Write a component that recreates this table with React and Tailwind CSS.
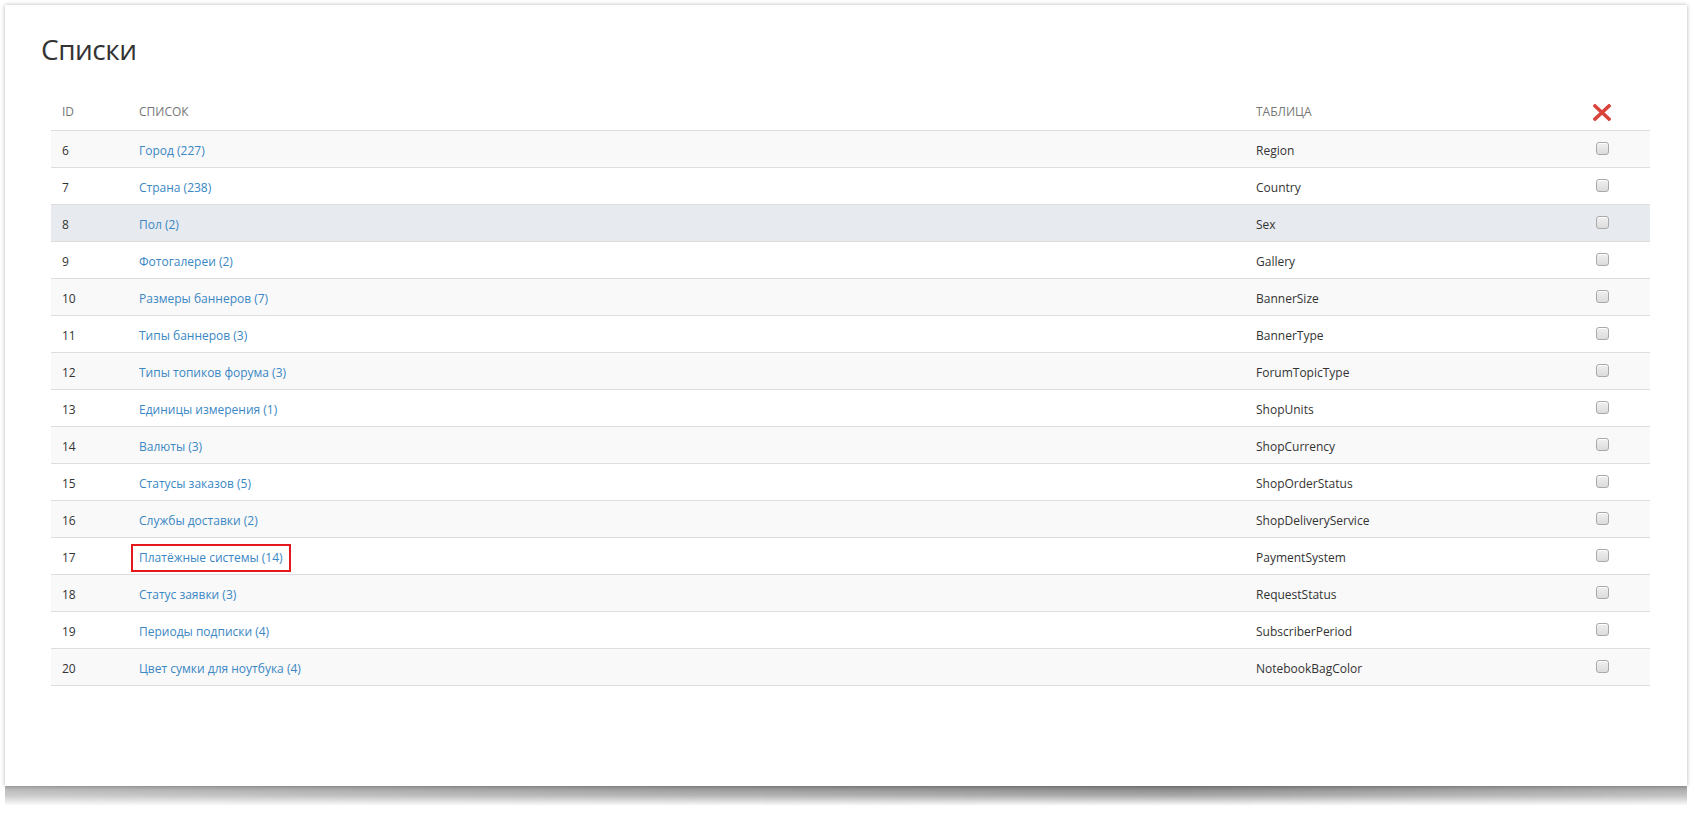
import React from "react";

const rows = [
  [6, "Город (227)", "Region"],
  [7, "Страна (238)", "Country"],
  [8, "Пол (2)", "Sex"],
  [9, "Фотогалереи (2)", "Gallery"],
  [10, "Размеры баннеров (7)", "BannerSize"],
  [11, "Типы баннеров (3)", "BannerType"],
  [12, "Типы топиков форума (3)", "ForumTopicType"],
  [13, "Единицы измерения (1)", "ShopUnits"],
  [14, "Валюты (3)", "ShopCurrency"],
  [15, "Статусы заказов (5)", "ShopOrderStatus"],
  [16, "Службы доставки (2)", "ShopDeliveryService"],
  [17, "Платёжные системы (14)", "PaymentSystem"],
  [18, "Статус заявки (3)", "RequestStatus"],
  [19, "Периоды подписки (4)", "SubscriberPeriod"],
  [20, "Цвет сумки для ноутбука (4)", "NotebookBagColor"],
];

function Checkbox() {
  return (
    <div className="w-[13px] h-[13px] rounded-[3px] border border-[#a9a9a9] bg-gradient-to-b from-[#f0f0f0] to-[#dcdcdc] shadow-[inset_0_1px_0_#fff]" />
  );
}

export default function App() {
  return (
    <div
      className="w-[1701px] h-[815px] bg-white overflow-hidden pt-[5px] pl-[5px]"
      style={{ fontFamily: '"Open Sans", "Noto Sans", sans-serif' }}
    >
      <div className="w-[1682px]">
        <div className="relative z-10 h-[781px] bg-white shadow-[0_0_4px_rgba(0,0,0,0.3)] pt-[24px] pl-[46px] pr-[37px]">
          <h1 className="text-[28px] leading-[40px] text-[#333] font-normal -ml-[10px] tracking-[-0.5px]">Списки</h1>
          <div className="mt-[25px] text-[12px]">
            <div className="grid grid-cols-[77px_1117px_340px_1fr] h-[37px] items-center text-[12px] text-[#777] border-b border-[#dddddd]">
              <div className="pl-[11px]">ID</div>
              <div className="pl-[11px]">СПИСОК</div>
              <div className="pl-[11px]">ТАБЛИЦА</div>
              <div className="pl-[8px] flex items-center">
                <svg width="18" height="17" viewBox="0 0 18 17">
                  <path d="M2 2 L16 15 M16 2 L2 15" stroke="#d9433a" strokeWidth="3.6" strokeLinecap="square" />
                </svg>
              </div>
            </div>
            {rows.map(([id, name, table], i) => {
              const bg = i === 2 ? "bg-[#e7ebef]" : i % 2 === 0 ? "bg-[#f9f9f9]" : "bg-white";
              return (
                <div
                  key={id}
                  className={`grid grid-cols-[77px_1117px_340px_1fr] h-[37px] pt-[3px] items-center border-b border-[#dddddd] ${bg}`}
                >
                  <div className="pl-[11px] text-[#333]">{id}</div>
                  <div className="pl-[11px]">
                    {id === 17 ? (
                      <span className="inline-block -ml-[8px] px-[6px] h-[28px] leading-[24px] border-2 border-[#e3191c] text-[#3a87c4]">
                        {name}
                      </span>
                    ) : (
                      <span className="text-[#3a87c4]">{name}</span>
                    )}
                  </div>
                  <div className="pl-[11px] text-[#333]">{table}</div>
                  <div className="pl-[11px] flex items-center -mt-[4px]">
                    <Checkbox />
                  </div>
                </div>
              );
            })}
          </div>
        </div>
        <div className="h-[21px] -mt-[1px] bg-gradient-to-b from-[#7a7a7a] via-[#a9a9a9] to-[rgba(255,255,255,0)] [mask-image:linear-gradient(to_right,rgba(0,0,0,0.6),rgba(0,0,0,0.85)_40%,rgba(0,0,0,1)_70%,rgba(0,0,0,0.7))]" />
      </div>
    </div>
  );
}
